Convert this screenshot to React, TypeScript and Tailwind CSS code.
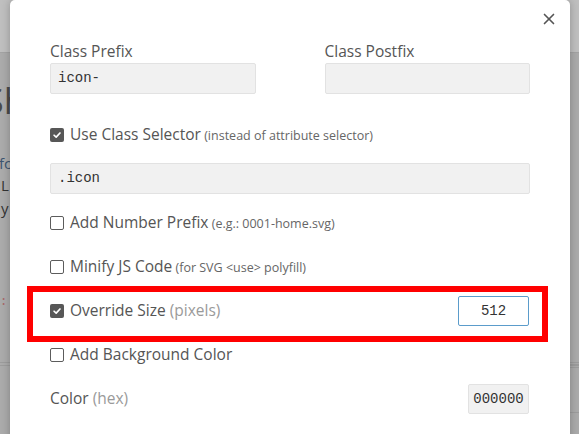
import { X } from 'lucide-react';

const sans = { fontFamily: '"Open Sans", "Noto Sans", sans-serif' };

const Check = ({ checked }: { checked?: boolean }) =>
  checked ? (
    <span className="flex h-[14px] w-[14px] shrink-0 items-center justify-center rounded-[2px] bg-[#575757]">
      <svg viewBox="0 0 12 12" className="h-[10px] w-[10px]" fill="none" stroke="#fff" strokeWidth="2" strokeLinecap="round" strokeLinejoin="round">
        <path d="M2.5 6.3 L5 8.6 L9.6 3.6" />
      </svg>
    </span>
  ) : (
    <span className="block h-[14px] w-[14px] shrink-0 rounded-[2px] border-[1.5px] border-[#5c5c5c] bg-white" />
  );

const Row = ({ checked, label, hint, big }: { checked?: boolean; label: string; hint?: string; big?: boolean }) => (
  <div className="flex items-center gap-[6px]">
    <Check checked={checked} />
    <span className="text-[15.5px] text-[#555]">
      {label}
      {hint && (
        <span className={big ? 'text-[15.5px] text-[#9a9a9a]' : 'text-[12.5px] text-[#666]'}> {hint}</span>
      )}
    </span>
  </div>
);

const mono = "font-['Liberation_Mono',monospace] text-[14px] text-[#333]";

export default function App() {
  return (
    <div className="relative h-[434px] w-[579px] overflow-hidden bg-[#ababab]" style={sans}>
      {/* page behind the dialog, already dimmed */}
      <div className="h-[53px] border-b border-[#a3a3a3] bg-[#bfbfbf]" />
      <div>
        <div className="ml-[-16px] mt-[28px] text-[36px] leading-[40px] text-[#4a4a4a]">Sh</div>
        <div className="ml-[-1px] mt-[31px] text-[15px] leading-[22px] text-[#3d5570]">fc</div>
        <div className="ml-[1px] text-[15px] leading-[22px] text-[#333]">L</div>
        <div className="ml-[1px] text-[15px] leading-[24px] text-[#333]">y</div>
        <div className="ml-[-8px] mt-[72px] font-['Liberation_Mono',monospace] text-[13px] text-[#a86a6a]">e:</div>
        <div className="mt-[50px] h-[4px] border-y border-[#9c9c9c]" />
      </div>
      <div className="absolute right-0 top-[364px] h-[4px] w-[9px] border-y border-[#9c9c9c]" />
      <div className="absolute right-0 top-[412px] h-[1px] w-[9px] bg-[#9c9c9c]" />

      {/* dialog */}
      <div className="absolute left-[10px] top-0 h-[460px] w-[560px] rounded-[5px] bg-white px-[40px] pt-[41px] shadow-[0_0_8px_rgba(0,0,0,0.25)]">
        <button className="absolute right-[12px] top-[10px] text-[#555]">
          <X size={18} strokeWidth={2.2} />
        </button>

        <div className="grid grid-cols-2 gap-x-[69px]">
          <div>
            <div className="mb-[2px] h-[20px] text-[15.5px] leading-[20px] text-[#555]">Class Prefix</div>
            <div className={`flex h-[31px] items-center rounded-[2px] border border-[#e2e2e2] bg-[#f1f1f1] px-[7px] ${mono}`}>icon-</div>
          </div>
          <div>
            <div className="mb-[2px] h-[20px] text-[15.5px] leading-[20px] text-[#555]">Class Postfix</div>
            <div className="h-[31px] rounded-[2px] border border-[#e2e2e2] bg-[#f1f1f1]" />
          </div>
        </div>

        <div className="mt-[29px] flex h-[24px] items-center">
          <Row checked label="Use Class Selector" hint="(instead of attribute selector)" />
        </div>

        <div className={`mt-[16px] flex h-[31px] items-center rounded-[2px] border border-[#e2e2e2] bg-[#f1f1f1] px-[7px] ${mono}`}>.icon</div>

        <div className="mt-[7px] flex h-[44px] items-center">
          <Row label="Add Number Prefix" hint="(e.g.: 0001-home.svg)" />
        </div>
        <div className="flex h-[44px] items-center">
          <Row label="Minify JS Code" hint="(for SVG <use> polyfill)" />
        </div>
        <div className="relative flex h-[44px] items-center justify-between">
          <Row checked big label="Override Size" hint="(pixels)" />
          <div className={`mr-px flex h-[30px] w-[71px] items-center justify-center rounded-[2px] border border-[#5b9ccb] bg-white ${mono}`}>512</div>
          <div className="pointer-events-none absolute bottom-[-9px] left-[-23px] right-[-18px] top-[-3px] border-[6px] border-[#ff0000]" />
        </div>
        <div className="flex h-[44px] items-center">
          <Row label="Add Background Color" />
        </div>
        <div className="flex h-[44px] items-center justify-between">
          <span className="text-[15.5px] text-[#555]">
            Color <span className="text-[#9a9a9a]">(hex)</span>
          </span>
          <div className={`mr-px flex h-[30px] w-[61px] items-center justify-center rounded-[2px] border border-[#e2e2e2] bg-[#f1f1f1] ${mono}`}>000000</div>
        </div>
      </div>
    </div>
  );
}
